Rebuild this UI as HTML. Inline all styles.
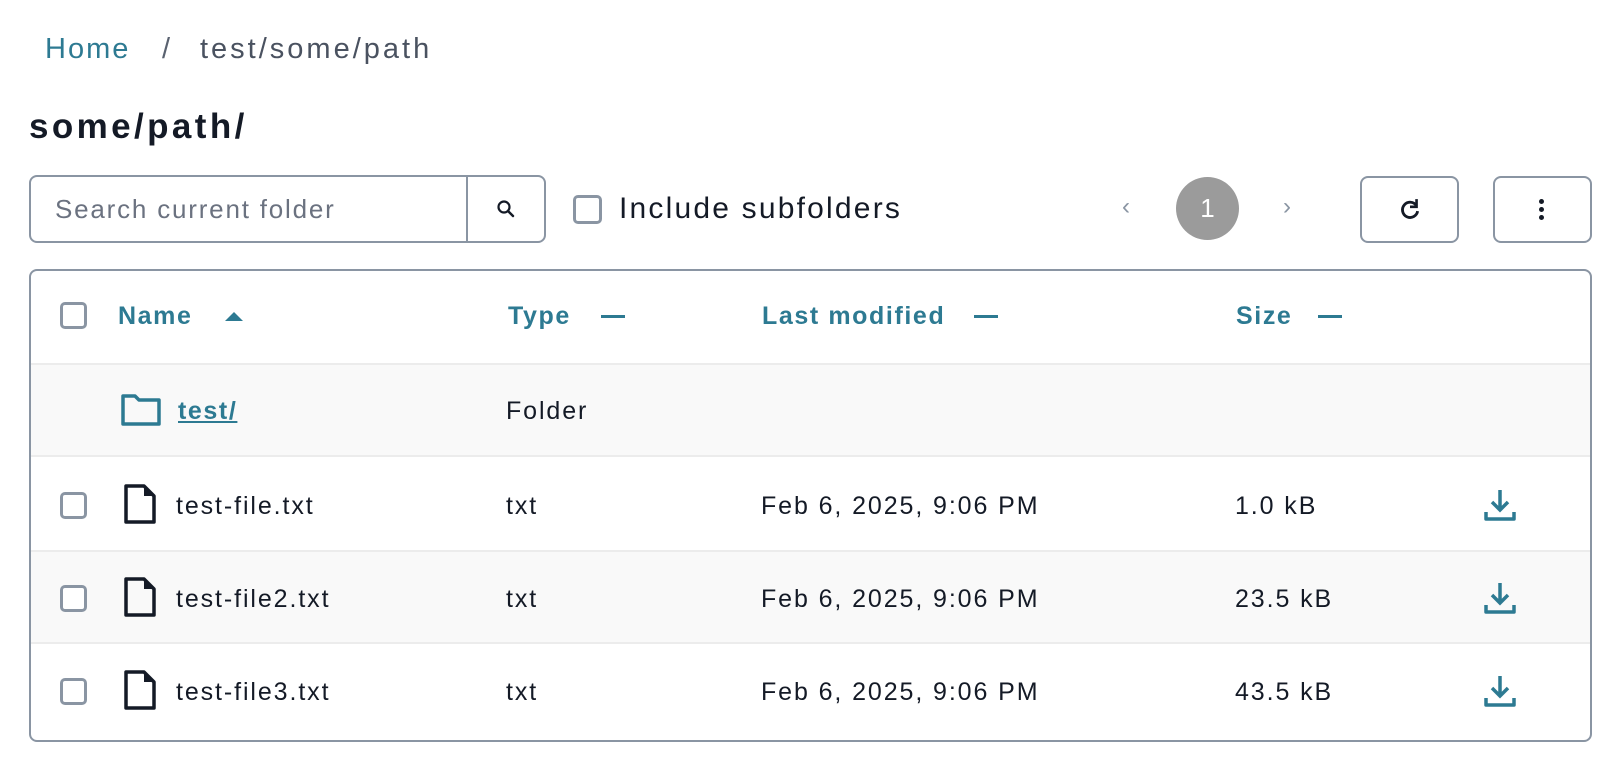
<!DOCTYPE html>
<html><head><meta charset="utf-8"><style>
*{box-sizing:border-box;margin:0;padding:0}
body{width:1622px;height:782px;background:#fff;font-family:"Liberation Sans",sans-serif;color:#141a26;position:relative;overflow:hidden}
.a{position:absolute;white-space:nowrap}
.t{color:#2d7a92}
.hd{font-weight:bold;font-size:25px;color:#2d7a92;letter-spacing:1.6px}
.cb{position:absolute;width:27px;height:27px;border:3px solid #8a95a3;border-radius:5px;background:#fff}
.cell{font-size:25px;position:absolute;letter-spacing:1.9px;white-space:nowrap}
.dash{position:absolute;width:24px;height:3px;background:#2d7a92}
.btn{position:absolute;border:2px solid #8a95a3;border-radius:8px;background:#fff}
</style></head><body>
<div class="a t" style="left:45px;top:33px;font-size:29px;letter-spacing:2px">Home</div>
<div class="a" style="left:162px;top:33px;font-size:29px;color:#5a6270">/</div>
<div class="a" style="left:200px;top:33px;font-size:29px;color:#4a5260;letter-spacing:3px">test/some/path</div>
<div class="a" style="left:29px;top:107px;font-size:35px;font-weight:bold;color:#141a26;letter-spacing:3.4px">some/path/</div>

<div class="a" style="left:29px;top:175px;width:517px;height:68px;border:2px solid #8a95a3;border-radius:8px"></div>
<div class="a" style="left:466px;top:175px;width:2px;height:68px;background:#8a95a3"></div>
<div class="a" style="left:55px;top:194px;font-size:26px;color:#6b7280;letter-spacing:1.8px">Search current folder</div>
<svg class="a" style="left:496px;top:199px" width="20" height="20" viewBox="0 0 20 20"><circle cx="8" cy="8" r="5.5" fill="none" stroke="#141a26" stroke-width="2.2"/><path d="M12 12l5 5" stroke="#141a26" stroke-width="2.4" stroke-linecap="round"/></svg>

<div class="cb" style="left:573px;top:195px;width:29px;height:29px"></div>
<div class="a" style="left:619px;top:192px;font-size:30px;color:#141a26;letter-spacing:2.2px">Include subfolders</div>

<div class="a" style="left:1122px;top:193px;font-size:24px;color:#8a95a3">&#8249;</div>
<div class="a" style="left:1176px;top:177px;width:63px;height:63px;border-radius:50%;background:#9b9b9b;color:#fff;font-size:26px;text-align:center;line-height:63px">1</div>
<div class="a" style="left:1283px;top:193px;font-size:24px;color:#8a95a3">&#8250;</div>

<div class="btn" style="left:1360px;top:176px;width:99px;height:67px"></div>
<svg class="a" style="left:1398px;top:197px" width="24" height="24" viewBox="0 0 22 22"><path d="M17 8A7 7 0 1 0 18 13" fill="none" stroke="#141a26" stroke-width="2.6"/><path d="M17 2v7h-6" fill="none" stroke="#141a26" stroke-width="2.4"/></svg>
<div class="btn" style="left:1493px;top:176px;width:99px;height:67px"></div>
<div class="a" style="left:1539px;top:199px;width:5px;height:5px;border-radius:50%;background:#141a26"></div>
<div class="a" style="left:1539px;top:207px;width:5px;height:5px;border-radius:50%;background:#141a26"></div>
<div class="a" style="left:1539px;top:215px;width:5px;height:5px;border-radius:50%;background:#141a26"></div>

<div class="a" style="left:29px;top:269px;width:1563px;height:473px;border:2px solid #8a95a3;border-radius:8px;overflow:hidden">
  <div class="a" style="left:0;top:92px;width:100%;height:94px;background:#f9f9f9;border-top:2px solid #ececec;border-bottom:2px solid #ececec"></div>
  <div class="a" style="left:0;top:279px;width:100%;height:94px;background:#f9f9f9;border-top:2px solid #ececec;border-bottom:2px solid #ececec"></div>
</div>

<div class="cb" style="left:60px;top:302px"></div>
<div class="a hd" style="left:118px;top:302px">Name</div>
<svg class="a" style="left:224px;top:310px" width="20" height="12"><path d="M1 11L10 2L19 11Z" fill="#2d7a92"/></svg>
<div class="a hd" style="left:508px;top:302px">Type</div><div class="dash" style="left:601px;top:315px"></div>
<div class="a hd" style="left:762px;top:302px">Last modified</div><div class="dash" style="left:974px;top:315px"></div>
<div class="a hd" style="left:1236px;top:302px">Size</div><div class="dash" style="left:1318px;top:315px"></div>

<svg class="a" style="left:120px;top:393px" width="42" height="34" viewBox="0 0 42 34"><path d="M3 3h12l4 4h20v24H3z" fill="none" stroke="#2d7a92" stroke-width="3.5" stroke-linejoin="round"/></svg>
<div class="a" style="left:178px;top:397px;font-size:25px;font-weight:bold;color:#2d7a92;text-decoration:underline;letter-spacing:1.6px">test/</div>
<div class="cell" style="left:506px;top:397px">Folder</div>

<div class="cb" style="left:60px;top:492px"></div>
<svg class="a" style="left:123px;top:484px" width="34" height="40" viewBox="0 0 34 40"><path d="M3 2h18l10 10v26H3z" fill="none" stroke="#141a26" stroke-width="3.5" stroke-linejoin="round"/><path d="M21 2v10h10z" fill="#141a26"/></svg>
<div class="cell" style="left:176px;top:492px">test-file.txt</div>
<div class="cell" style="left:506px;top:492px">txt</div>
<div class="cell" style="left:761px;top:492px">Feb 6, 2025, 9:06 PM</div>
<div class="cell" style="left:1235px;top:492px">1.0 kB</div>

<div class="cb" style="left:60px;top:585px"></div>
<svg class="a" style="left:123px;top:577px" width="34" height="40" viewBox="0 0 34 40"><path d="M3 2h18l10 10v26H3z" fill="none" stroke="#141a26" stroke-width="3.5" stroke-linejoin="round"/><path d="M21 2v10h10z" fill="#141a26"/></svg>
<div class="cell" style="left:176px;top:585px">test-file2.txt</div>
<div class="cell" style="left:506px;top:585px">txt</div>
<div class="cell" style="left:761px;top:585px">Feb 6, 2025, 9:06 PM</div>
<div class="cell" style="left:1235px;top:585px">23.5 kB</div>

<div class="cb" style="left:60px;top:678px"></div>
<svg class="a" style="left:123px;top:670px" width="34" height="40" viewBox="0 0 34 40"><path d="M3 2h18l10 10v26H3z" fill="none" stroke="#141a26" stroke-width="3.5" stroke-linejoin="round"/><path d="M21 2v10h10z" fill="#141a26"/></svg>
<div class="cell" style="left:176px;top:678px">test-file3.txt</div>
<div class="cell" style="left:506px;top:678px">txt</div>
<div class="cell" style="left:761px;top:678px">Feb 6, 2025, 9:06 PM</div>
<div class="cell" style="left:1235px;top:678px">43.5 kB</div>

<svg class="a" style="left:1484px;top:488px" width="32" height="34" viewBox="0 0 32 34"><path d="M16 2v20M8 14l8 8 8-8" fill="none" stroke="#2d7a92" stroke-width="3.5"/><path d="M2 24v7h28v-7" fill="none" stroke="#2d7a92" stroke-width="3.5" stroke-linejoin="round"/></svg>
<svg class="a" style="left:1484px;top:581px" width="32" height="34" viewBox="0 0 32 34"><path d="M16 2v20M8 14l8 8 8-8" fill="none" stroke="#2d7a92" stroke-width="3.5"/><path d="M2 24v7h28v-7" fill="none" stroke="#2d7a92" stroke-width="3.5" stroke-linejoin="round"/></svg>
<svg class="a" style="left:1484px;top:674px" width="32" height="34" viewBox="0 0 32 34"><path d="M16 2v20M8 14l8 8 8-8" fill="none" stroke="#2d7a92" stroke-width="3.5"/><path d="M2 24v7h28v-7" fill="none" stroke="#2d7a92" stroke-width="3.5" stroke-linejoin="round"/></svg>
</body></html>
